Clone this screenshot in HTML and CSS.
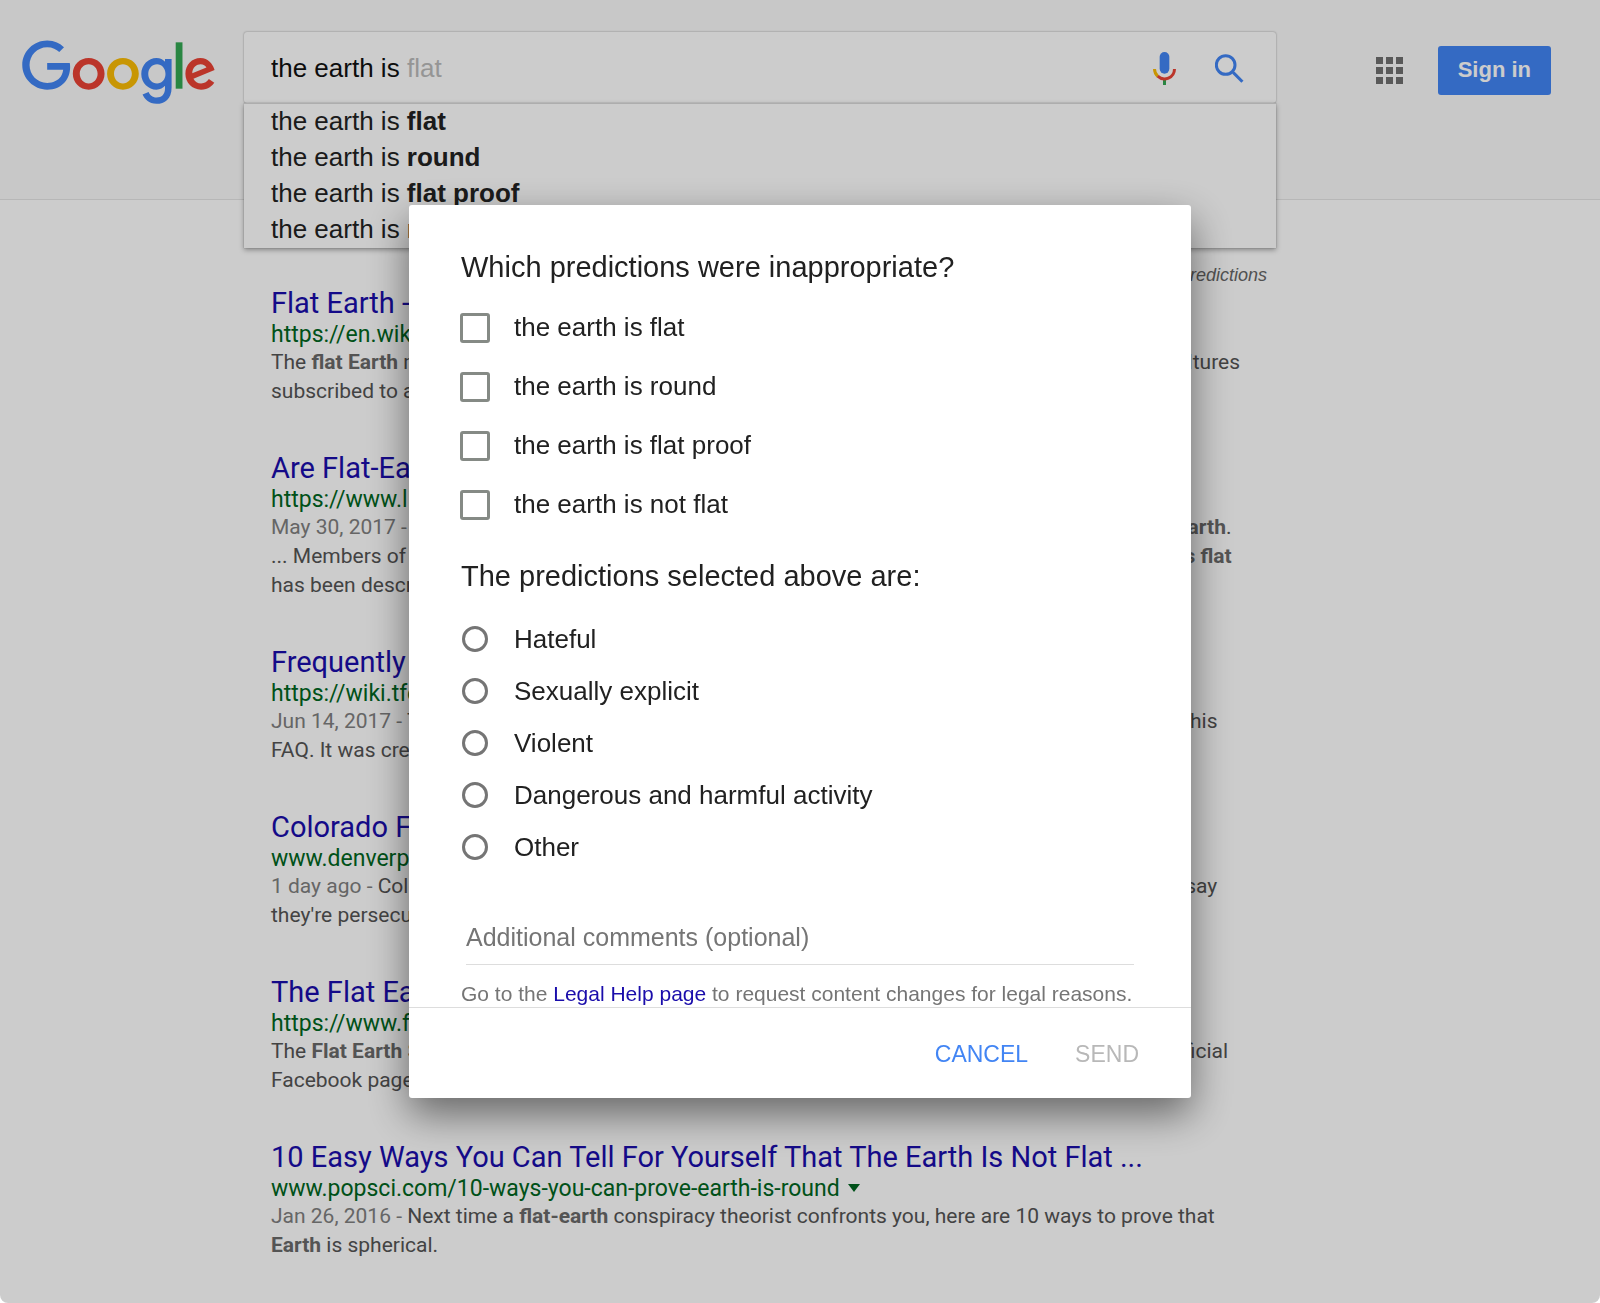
FILE: index.html
```html
<!DOCTYPE html>
<html lang="en">
<head>
<meta charset="utf-8">
<meta name="viewport" content="width=device-width, initial-scale=1">
<title>the earth is - Google Search</title>
<link rel="stylesheet" href="styles.css">
</head>
<body>
<header class="header">
  <a class="logo" href="#" aria-label="Google">
    <svg viewBox="0 0 272 92" width="194" height="66" aria-hidden="true">
      <path fill="#EA4335" d="M115.75 47.18c0 12.77-9.99 22.18-22.25 22.18s-22.25-9.41-22.25-22.18C71.25 34.32 81.24 25 93.5 25s22.25 9.32 22.25 22.18zm-9.74 0c0-7.98-5.79-13.44-12.51-13.44S80.99 39.2 80.99 47.18c0 7.9 5.79 13.44 12.51 13.44s12.51-5.55 12.51-13.44z"/>
      <path fill="#FBBC05" d="M163.75 47.18c0 12.77-9.99 22.18-22.25 22.18s-22.25-9.41-22.25-22.18c0-12.85 9.99-22.18 22.25-22.18s22.25 9.32 22.25 22.18zm-9.74 0c0-7.98-5.79-13.44-12.51-13.44s-12.51 5.46-12.51 13.44c0 7.9 5.79 13.44 12.51 13.44s12.51-5.55 12.51-13.44z"/>
      <path fill="#4285F4" d="M209.75 26.34v39.82c0 16.38-9.66 23.07-21.08 23.07-10.75 0-17.22-7.19-19.66-13.07l8.48-3.53c1.51 3.61 5.21 7.87 11.17 7.87 7.31 0 11.84-4.51 11.84-13v-3.19h-.34c-2.18 2.69-6.38 5.04-11.68 5.04-11.09 0-21.25-9.66-21.25-22.09 0-12.52 10.16-22.26 21.25-22.26 5.29 0 9.49 2.35 11.68 4.96h.34v-3.61h9.25zm-8.56 20.92c0-7.81-5.21-13.52-11.84-13.52-6.72 0-12.35 5.71-12.35 13.52 0 7.73 5.63 13.36 12.35 13.36 6.63 0 11.84-5.63 11.84-13.36z"/>
      <path fill="#34A853" d="M225 3v65h-9.500V3h9.500z"/>
      <path fill="#EA4335" d="M262.02 54.48l7.56 5.04c-2.44 3.61-8.32 9.83-18.48 9.83-12.6 0-22.01-9.74-22.01-22.18 0-13.19 9.49-22.18 20.92-22.18 11.51 0 17.14 9.16 18.98 14.11l1.01 2.52-29.65 12.28c2.27 4.45 5.8 6.72 10.75 6.72 4.96 0 8.4-2.44 10.92-6.14zm-23.27-7.98l19.82-8.23c-1.09-2.77-4.37-4.7-8.23-4.7-4.95 0-11.84 4.37-11.59 12.93z"/>
      <path fill="#4285F4" d="M35.29 41.41V32H67c.31 1.64.47 3.58.47 5.68 0 7.06-1.93 15.79-8.15 22.01-6.05 6.3-13.78 9.66-24.02 9.66C16.32 69.35.36 53.89.36 34.91.36 15.93 16.32.47 35.3.47c10.5 0 17.98 4.12 23.6 9.49l-6.64 6.64c-4.03-3.78-9.49-6.72-16.97-6.72-13.86 0-24.7 11.17-24.7 25.03 0 13.86 10.84 25.03 24.7 25.03 8.99 0 14.11-3.61 17.39-6.89 2.66-2.66 4.41-6.46 5.1-11.65l-22.49.01z"/>
    </svg>
  </a>
  <div class="search">
    <form class="search-form" role="search">
      <input class="search-input" type="text" aria-label="Search" value="the earth is " autocomplete="off">
      <span class="search-hint">flat</span>
      <button class="icon-button" type="button" aria-label="Search by voice">
        <svg viewBox="99 96 69 99" width="23" height="33" aria-hidden="true">
          <rect x="119" y="96" width="29" height="65" rx="14.500" fill="#4285F4"/>
          <path d="M133.500 178v17" stroke="#34A853" stroke-width="9" fill="none"/>
          <path d="M103.500 147a30 30 0 0 0 10 22" stroke="#FBBC05" stroke-width="9" fill="none"/>
          <path d="M113 168.500a30 30 0 0 0 50.500-21.500" stroke="#EA4335" stroke-width="9" fill="none"/>
        </svg>
      </button>
      <button class="icon-button" type="submit" aria-label="Google Search">
        <svg viewBox="285 105 87 87" width="29" height="29" aria-hidden="true">
          <circle cx="317" cy="138" r="28" stroke="#4285F4" stroke-width="9" fill="none"/>
          <path d="M337 158l7 0 26.500 27-6.500 6.500-27-27z" fill="#4285F4"/>
        </svg>
      </button>
    </form>
    <ul class="suggestions">
      <li>the earth is <b>flat</b></li>
      <li>the earth is <b>round</b></li>
      <li>the earth is <b>flat proof</b></li>
      <li>the earth is <b>not flat</b></li>
    </ul>
  </div>
  <nav class="account">
    <button class="icon-button" type="button" aria-label="Google apps">
      <svg viewBox="0 0 27 27" width="27" height="27" fill="#707070" aria-hidden="true">
        <path d="M0 0h7v7H0zM10 0h7v7h-7zM20 0h7v7h-7zM0 10h7v7H0zM10 10h7v7h-7zM20 10h7v7h-7zM0 20h7v7H0zM10 20h7v7h-7zM20 20h7v7h-7z"/>
      </svg>
    </button>
    <a class="sign-in" href="#">Sign in</a>
  </nav>
</header>

<main class="results">
  <p class="report"><a href="#">Report inappropriate predictions</a></p>
  <article class="result">
    <h3 class="result-title"><a href="#">Flat Earth - Wikipedia</a></h3>
    <p class="result-url">https://en.wikipedia.org/wiki/Flat_Earth</p>
    <p class="snippet">The <b>flat Earth</b> model is an archaic conception of Earth's shape as a plane or plate. Many ancient cultures<br>subscribed to a <b>flat Earth</b> cosmography.</p>
  </article>
  <article class="result">
    <h3 class="result-title"><a href="#">Are Flat-Earthers Being Serious?</a></h3>
    <p class="result-url">https://www.livescience.com/24310-flat-earth-belief.html</p>
    <p class="snippet"><span class="date">May 30, 2017 - </span>Flat-earthers explain what they believe and how they think about the true shape of <b>Earth</b>.<br>... Members of the Flat Earth Society claim to believe the Earth is flat. The whole theory that <b>Earth is flat</b><br>has been described as a conspiracy theory.</p>
  </article>
  <article class="result">
    <h3 class="result-title"><a href="#">Frequently Asked Questions - The Flat Earth Wiki</a></h3>
    <p class="result-url">https://wiki.tfes.org/Frequently_Asked_Questions</p>
    <p class="snippet"><span class="date">Jun 14, 2017 - </span>The Flat Earth Society answers the most common questions asked by all visitors in this<br>FAQ. It was created for new members.</p>
  </article>
  <article class="result">
    <h3 class="result-title"><a href="#">Colorado Flat Earthers - The Denver Post</a></h3>
    <p class="result-url">www.denverpost.com/colorado-earth-flat</p>
    <p class="snippet"><span class="date">1 day ago - </span>Colorado has a growing community of people who believe the world is flat, and they all say<br>they're persecuted for it.</p>
  </article>
  <article class="result">
    <h3 class="result-title"><a href="#">The Flat Earth Society</a></h3>
    <p class="result-url">https://www.facebook.com/FlatEarthToday</p>
    <p class="snippet">The <b>Flat Earth</b> Society is a group of people from all over the world who share an idea. This is the official<br>Facebook page of the society.</p>
  </article>
  <article class="result">
    <h3 class="result-title"><a href="#">10 Easy Ways You Can Tell For Yourself That The Earth Is Not Flat ...</a></h3>
    <p class="result-url">www.popsci.com/10-ways-you-can-prove-earth-is-round<span class="caret"></span></p>
    <p class="snippet"><span class="date">Jan 26, 2016 - </span>Next time a <b>flat-earth</b> conspiracy theorist confronts you, here are 10 ways to prove that<br><b>Earth</b> is spherical.</p>
  </article>
</main>

<div class="scrim">
  <form class="dialog" role="dialog" aria-modal="true" aria-label="Report predictions">
    <div class="dialog-body">
      <fieldset>
        <legend>Which predictions were inappropriate?</legend>
        <div class="checks">
          <label><input type="checkbox" name="prediction">the earth is flat</label>
          <label><input type="checkbox" name="prediction">the earth is round</label>
          <label><input type="checkbox" name="prediction">the earth is flat proof</label>
          <label><input type="checkbox" name="prediction">the earth is not flat</label>
        </div>
      </fieldset>
      <fieldset>
        <legend>The predictions selected above are:</legend>
        <div class="radios">
          <label><input type="radio" name="reason">Hateful</label>
          <label><input type="radio" name="reason">Sexually explicit</label>
          <label><input type="radio" name="reason">Violent</label>
          <label><input type="radio" name="reason">Dangerous and harmful activity</label>
          <label><input type="radio" name="reason">Other</label>
        </div>
      </fieldset>
      <input class="comments" type="text" aria-label="Additional comments (optional)" placeholder="Additional comments (optional)">
      <p class="legal">Go to the <a href="#">Legal Help page</a> to request content changes for legal reasons.</p>
    </div>
    <div class="dialog-actions">
      <button class="cancel" type="button">CANCEL</button>
      <button class="send" type="submit" disabled>SEND</button>
    </div>
  </form>
</div>
</body>
</html>
```

FILE: styles.css
```css
* {
  box-sizing: border-box;
  margin: 0;
  padding: 0;
}

body {
  min-height: 100vh;
  background: #fff;
  color: #222;
  font-family: "Liberation Sans", Arial, sans-serif;
}

a {
  color: #1a0dab;
  text-decoration: none;
}

button {
  border: 0;
  background: none;
  font-family: inherit;
}

svg {
  display: block;
}

/* Header */

.header {
  display: flex;
  align-items: flex-start;
  height: 200px;
  padding: 32px 49px 0 22px;
  border-bottom: 1px solid #e5e5e5;
  background: #fafafa;
}

.logo {
  margin: 8px 28px 0 0;
}

.search {
  position: relative;
  flex: 0 1 1032px;
}

.search-form {
  display: flex;
  align-items: center;
  height: 71px;
  padding: 2px 32px 0 27px;
  border-radius: 3px;
  background: #fff;
  box-shadow: 0 0 2px rgba(0, 0, 0, 0.4);
  font-size: 26px;
}

.search-input {
  width: 136px;
  border: 0;
  outline: 0;
  background: none;
  color: #111;
  font: inherit;
}

.search-hint {
  flex: 1;
  color: #bbb;
}

.search-form .icon-button + .icon-button {
  margin-left: 39px;
}

.suggestions {
  position: absolute;
  top: 100%;
  left: 0;
  right: 0;
  padding: 0 27px 1px;
  border-top: 1px solid #d9d9d9;
  background: #fff;
  box-shadow: 0 2px 5px rgba(0, 0, 0, 0.35), 0 0 1px rgba(0, 0, 0, 0.3);
  font-size: 26px;
  line-height: 36px;
  list-style: none;
}

.suggestions li:first-child {
  margin-top: -1px;
}

.account {
  display: flex;
  align-items: center;
  gap: 35px;
  margin: 14px 0 0 auto;
}

.sign-in {
  padding: 0 20px 2px;
  border-radius: 3px;
  background: #4285f4;
  color: #fff;
  font-size: 22px;
  font-weight: 700;
  line-height: 47px;
}

/* Results */

.results {
  max-width: 1267px;
  padding: 65px 0 0 271px;
}

.report {
  margin-bottom: 3px;
  font-size: 18px;
  font-style: italic;
  line-height: 20px;
  text-align: right;
}

.report a {
  color: #666;
}

.result {
  margin-bottom: 47px;
  font-family: Roboto, sans-serif;
}

.result:last-child {
  margin-bottom: 0;
}

.result-title {
  margin-bottom: 4px;
  font-size: 29px;
  font-weight: 400;
  line-height: 30px;
}

.result-url {
  color: #006621;
  font-size: 23px;
  line-height: 26px;
}

.caret {
  display: inline-block;
  margin-left: 8px;
  border: 6px solid transparent;
  border-top: 8px solid #006621;
  border-bottom: 0;
  vertical-align: 4px;
}

.snippet {
  color: #545454;
  font-size: 21px;
  line-height: 29px;
  white-space: nowrap;
}

.snippet b {
  color: #6a6a6a;
}

.date {
  color: #808080;
}

/* Dialog */

.scrim {
  position: fixed;
  inset: 0;
  display: flex;
  align-items: center;
  justify-content: center;
  border-radius: 0 0 8px 8px;
  background: rgba(0, 0, 0, 0.2);
}

.dialog {
  width: 782px;
  max-width: 100%;
  border-radius: 3px;
  background: #fff;
  box-shadow: 0 16px 40px rgba(0, 0, 0, 0.5);
  color: #212121;
}

.dialog-body {
  padding: 45px 51px 0;
}

fieldset {
  border: 0;
}

fieldset + fieldset {
  margin-top: 25px;
}

legend {
  padding-left: 1px;
  font-size: 29px;
  line-height: 34px;
}

.checks {
  padding-top: 14px;
}

.radios {
  padding-top: 20px;
}

.checks label,
.radios label {
  display: flex;
  align-items: center;
  height: 59px;
  font-size: 26px;
}

.radios label {
  height: 52px;
}

.checks input,
.radios input {
  width: 30px;
  height: 30px;
  margin-right: 24px;
  border: 3px solid #858a85;
  border-radius: 3px;
  appearance: none;
}

.radios input {
  width: 26px;
  height: 26px;
  margin: 0 26px 0 2px;
  border-color: #757575;
  border-radius: 50%;
}

.comments {
  display: block;
  width: calc(100% - 12px);
  margin: 49px 6px 0;
  padding-bottom: 12px;
  border: 0;
  border-bottom: 1px solid #ddd;
  outline: 0;
  font: 25px/30px "Liberation Sans", Arial, sans-serif;
}

.comments::placeholder {
  color: #757575;
  opacity: 1;
}

.legal {
  padding: 17px 0 1px 1px;
  color: #757575;
  font-size: 21px;
  line-height: 24px;
  white-space: nowrap;
}

.dialog-actions {
  display: flex;
  align-items: center;
  justify-content: flex-end;
  gap: 47px;
  height: 91px;
  padding: 2px 52px 0 0;
  border-top: 1px solid #ddd;
}

.dialog-actions button {
  font-size: 23px;
}

.cancel {
  color: #4285f4;
}

.send {
  color: #b8b8b8;
}
```
